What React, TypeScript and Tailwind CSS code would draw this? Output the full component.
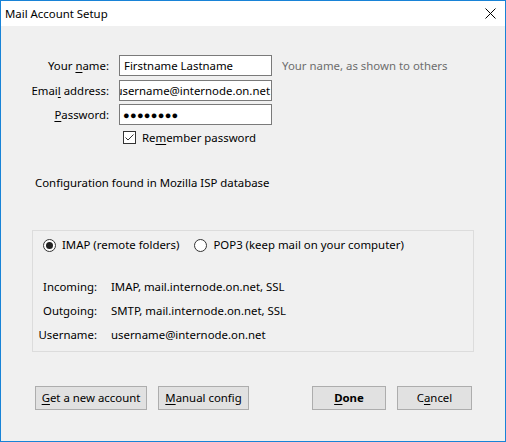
import React from "react"

const font = { fontFamily: '"Noto Sans", "Open Sans", sans-serif' }

const Label = ({ before, u, after }: { before: string; u: string; after: string }) => (
  <>
    {before}
    <span className="underline underline-offset-2">{u}</span>
    {after}
  </>
)

const Field = ({ children }: { children: React.ReactNode }) => (
  <div className="w-[153px] h-[21px] border border-[#7a7a7a] bg-white flex items-center overflow-hidden whitespace-nowrap">
    {children}
  </div>
)

const Button = ({ w, children }: { w: string; children: React.ReactNode }) => (
  <div className={`${w} h-[24px] border border-[#adadad] bg-[#e1e1e1] flex items-center justify-center text-black`}>
    {children}
  </div>
)

const App = () => {
  return (
    <div
      className="w-[506px] h-[442px] border border-[#1883d7] bg-[#f0f0f0] flex flex-col text-[11.4px] leading-[16px] text-black"
      style={font}
    >
      {/* TITLE BAR */}
      <div className="h-[25px] bg-white flex items-center justify-between pl-[4px] pr-[9px] shrink-0">
        <span>Mail Account Setup</span>
        <svg width="11" height="11" viewBox="0 0 11 11">
          <path d="M0.5 0.5 L10.5 10.5 M10.5 0.5 L0.5 10.5" stroke="#000" strokeWidth="1" />
        </svg>
      </div>

      {/* FORM */}
      <div className="pt-[29px] flex flex-col">
        <div className="flex items-center">
          <div className="w-[109px] text-right pr-[1px]">
            <Label before="Your " u="n" after="ame:" />
          </div>
          <div className="ml-[9px]">
            <Field>
              <span className="pl-[4px]">Firstname Lastname</span>
            </Field>
          </div>
          <span className="ml-[10px] text-[#6d6d6d]">Your name, as shown to others</span>
        </div>

        <div className="flex items-center mt-[4px]">
          <div className="w-[109px] text-right pr-[1px]">
            <Label before="Emai" u="l" after=" address:" />
          </div>
          <div className="ml-[9px]">
            <Field>
              <div className="w-full flex justify-end pr-[1px]">
                <span>username@internode.on.net</span>
              </div>
            </Field>
          </div>
        </div>

        <div className="flex items-center mt-[3px]">
          <div className="w-[109px] text-right pr-[1px]">
            <Label before="" u="P" after="assword:" />
          </div>
          <div className="ml-[9px]">
            <Field>
              <span className="pl-[3px] text-[11px] tracking-[0.3px]">●●●●●●●●</span>
            </Field>
          </div>
        </div>

        <div className="flex items-center h-[13px] mt-[6px] ml-[122px]">
          <div className="w-[13px] h-[13px] border border-[#333] bg-white flex items-center justify-center">
            <svg width="11" height="11" viewBox="0 0 11 11">
              <path d="M1.5 5.5 L4 8 L9.5 2.5" stroke="#333" strokeWidth="1" fill="none" />
            </svg>
          </div>
          <span className="ml-[6px]">
            <Label before="Re" u="m" after="ember password" />
          </span>
        </div>

        <div className="mt-[31px] ml-[34px]">Configuration found in Mozilla ISP database</div>

        {/* SERVER GROUP */}
        <div className="mt-[39px] ml-[31px] w-[442px] h-[122px] border border-[#dcdcdc] flex flex-col">
          <div className="flex items-center pt-[6px] pl-[10px]">
            <div className="w-[13px] h-[13px] rounded-full border border-[#333] bg-white flex items-center justify-center">
              <div className="w-[7px] h-[7px] rounded-full bg-[#222]" />
            </div>
            <span className="ml-[6px]">IMAP (remote folders)</span>
            <div className="ml-[15px] w-[13px] h-[13px] rounded-full border border-[#333] bg-white" />
            <span className="ml-[6px]">POP3 (keep mail on your computer)</span>
          </div>

          <div className="mt-[26px] grid grid-cols-[64px_1fr] gap-x-[14px] gap-y-[8px] leading-[16px]">
            <span className="text-right">Incoming:</span>
            <span>IMAP, mail.internode.on.net, SSL</span>
            <span className="text-right">Outgoing:</span>
            <span>SMTP, mail.internode.on.net, SSL</span>
            <span className="text-right">Username:</span>
            <span>username@internode.on.net</span>
          </div>
        </div>

        {/* BUTTONS */}
        <div className="mt-[34px] ml-[34px] flex">
          <Button w="w-[112px]">
            <Label before="" u="G" after="et a new account" />
          </Button>
          <div className="ml-[11px]">
            <Button w="w-[91px]">
              <Label before="" u="M" after="anual config" />
            </Button>
          </div>
          <div className="ml-[63px]">
            <Button w="w-[74px]">
              <span className="font-bold">
                <Label before="" u="D" after="one" />
              </span>
            </Button>
          </div>
          <div className="ml-[11px]">
            <Button w="w-[75px]">
              <Label before="C" u="a" after="ncel" />
            </Button>
          </div>
        </div>
      </div>
    </div>
  )
}

export default App
